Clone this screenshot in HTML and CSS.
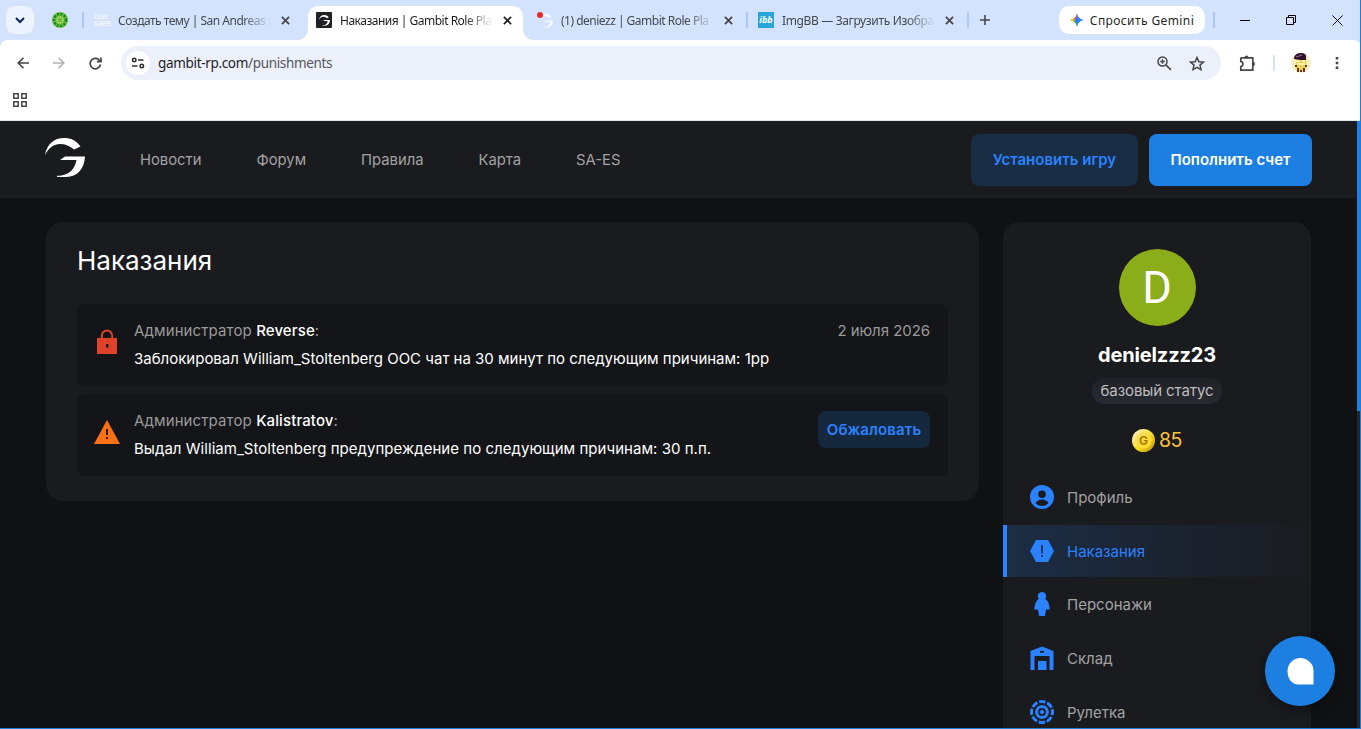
FILE: index.html
```html
<!DOCTYPE html>
<html lang="ru">
<head>
<meta charset="utf-8">
<title>Наказания | Gambit Role Play</title>
<link rel="stylesheet" href="styles.css">
</head>
<body>
<svg class="defs" aria-hidden="true">
  <symbol id="close" viewBox="0 0 10 10"><path d="M1 1l8 8M9 1L1 9" fill="none" stroke="currentColor" stroke-width="2"/></symbol>
  <symbol id="gambit" viewBox="0 0 40 40"><path d="M0 17C2 6 9 0 19 0c7 0 12.500 2.500 16.500 8.500L29 11.500C25 8 20.500 6 15 6 9 6 4 9.500 0 17zM20 18.500h20c-.5 12-7.500 20.500-19 20.500h-9v-1.200c9 0 17-3.300 19.500-15.800H15z" fill="currentColor"/></symbol>
</svg>
<div class="window">
  <div class="tabstrip">
    <button class="tab-search"><svg width="10" height="7" viewBox="0 0 10 7"><path d="M1 1l4 4 4-4" fill="none" stroke="#0b2459" stroke-width="2"/></svg></button>
    <svg class="pinned" width="16" height="16" viewBox="0 0 16 16"><circle cx="8" cy="8" r="8" fill="#6dba3c"/><circle cx="8" cy="8" r="6" fill="none" stroke="#138a22" stroke-width="2.500" stroke-dasharray="2 1.500"/><circle cx="8" cy="8" r="3" fill="none" stroke="#d1ed8b" stroke-width="1.500" stroke-dasharray="1 1"/></svg>
    <i class="sep"></i>
    <div class="tab tab-first"><span class="luasaes"><b>LUA:</b><b>SAES</b></span><span class="title">Создать тему | San Andreas E</span><svg class="x"><use href="#close"/></svg></div>
    <div class="tab active"><span class="gfav"><svg width="11" height="11"><use href="#gambit"/></svg></span><span class="title">Наказания | Gambit Role Pla</span><svg class="x"><use href="#close"/></svg></div>
    <div class="tab"><span class="gfav light"><svg width="14" height="14"><use href="#gambit"/></svg></span><span class="title">(1) deniezz | Gambit Role Pla</span><svg class="x"><use href="#close"/></svg></div>
    <i class="sep"></i>
    <div class="tab tab-last"><span class="ibb">ibb</span><span class="title">ImgBB — Загрузить Изобра</span><svg class="x"><use href="#close"/></svg></div>
    <i class="sep"></i>
    <svg class="plus" width="12" height="12" viewBox="0 0 12 12"><path d="M6 1v10M1 6h10" stroke="#444746" stroke-width="1.600"/></svg>
    <div class="tab-tools">
      <button class="gemini"><svg width="14" height="14" viewBox="0 0 14 14"><path d="M7 0Q8 6 14 7 8 8 7 14V0z" fill="#317efb"/><path d="M7 0Q6 6 0 7h7z" fill="#f4524d"/><path d="M0 7q6 1 7 7V7z" fill="#22b064"/><path d="M0 7l3.500-1.200L5 7l-1.500 1.200z" fill="#fbbc05"/><circle cx="7.500" cy="7" r="2.500" fill="#317efb"/></svg><span>Спросить Gemini</span></button>
      <i class="sep"></i>
      <svg class="win-min" width="10" height="11" viewBox="0 0 10 11"><path d="M0 5.500h10" stroke="#000"/></svg>
      <svg class="win-max" width="10" height="10" viewBox="0 0 10 10"><path d="M.5 2.500h7v7h-7zM2.500 2.500v-2h7v7h-2" fill="none" stroke="#000"/></svg>
      <svg class="win-close" width="11" height="11" viewBox="0 0 11 11"><path d="M.5.5l10 10M10.500.5l-10 10" stroke="#000"/></svg>
    </div>
  </div>
  <div class="toolbar">
    <div class="nav-buttons">
      <svg width="12" height="12" viewBox="0 0 12 12"><path d="M6.500.8L1.200 6l5.300 5.200M1.200 6H12" fill="none" stroke="#444746" stroke-width="1.600"/></svg>
      <svg width="12" height="12" viewBox="0 0 12 12"><path d="M5.500.8L10.800 6l-5.300 5.200M10.800 6H0" fill="none" stroke="#b0b1b1" stroke-width="1.600"/></svg>
      <svg width="13" height="13" viewBox="0 0 13 13"><path d="M11 4.200A5.200 5.200 0 1 0 11.500 7.500M12 .5v4.200H7.800" fill="none" stroke="#444746" stroke-width="1.700"/></svg>
    </div>
    <div class="omnibox">
      <span class="site"><svg width="14" height="12" viewBox="0 0 14 12"><g fill="none" stroke="#303236" stroke-width="1.600"><circle cx="3.200" cy="3" r="1.700"/><path d="M7 3h5.500M1 9h5.500"/><circle cx="10.800" cy="9" r="1.700"/></g></svg></span>
      <span class="url"><b>gambit-rp.com</b>/punishments</span>
      <svg class="zoom" width="15" height="15" viewBox="0 0 15 15"><g fill="none" stroke="#444746" stroke-width="1.500"><circle cx="5.500" cy="5.500" r="4.500"/><path d="M8.900 8.900l5 5M5.500 3.300v4.400M3.300 5.500h4.400"/></g></svg>
      <svg width="16" height="15" viewBox="0 0 16 15"><path d="M8 1.500l1.900 4.200 4.500.4-3.400 3 1 4.500L8 11.300l-4 2.300 1-4.500-3.400-3 4.500-.4z" fill="none" stroke="#444746" stroke-width="1.500"/></svg>
    </div>
    <svg class="puzzle" width="17" height="17" viewBox="0 0 17 17"><path d="M1.800 2.800h12v4.400M13.800 10.800v4.400h-12v-3.700c2.800-.4 2.800-4.600 0-5V2.800M13.800 7v4" fill="none" stroke="#444746" stroke-width="1.700"/><path d="M5.500 2.600a2 2 0 0 1 4 0zM14 7a2 2 0 0 1 0 4z" fill="#444746"/></svg>
    <i class="sep pale"></i>
    <svg class="profile" width="20" height="20" viewBox="0 0 20 20"><circle cx="10" cy="10" r="10" fill="#f7efbd"/><path d="M5 6h10v9l-2 3H7l-2-3z" fill="#e9ce5b"/><path d="M3 5Q4 0 10 0t5 5v2H9L3 6z" fill="#30102f"/><path d="M5 4l6-2" stroke="#9a6e96"/><path d="M5 8h4M11 8h3M6 11h8" stroke="#fff5a6" stroke-width="2"/><path d="M4 13h2M14 13h2M6 16h2M12 16h2M7 19v-2M10 19v-2M13 19v-2" stroke="#693321" stroke-width="2"/></svg>
    <svg width="4" height="14" viewBox="0 0 4 14"><path d="M.7 1h2.600v2.600H.7zM.7 5.700h2.600v2.600H.7zM.7 10.400h2.600V13H.7z" fill="#444746"/></svg>
  </div>
  <div class="bookmarks"><svg width="14" height="14" viewBox="0 0 14 14"><path d="M.8.8h4.400v4.400H.8zM8.800.8h4.400v4.400H8.800zM.8 8.800h4.400v4.400H.8zM8.800 8.800h4.400v4.400H8.800z" fill="none" stroke="#444746" stroke-width="1.500"/></svg></div>
  <div class="page">
    <header class="site-header">
      <svg class="logo" width="40" height="40"><use href="#gambit"/></svg>
      <nav><a>Новости</a><a>Форум</a><a>Правила</a><a>Карта</a><a>SA-ES</a></nav>
      <button class="btn install">Установить игру</button>
      <button class="btn topup">Пополнить счет</button>
    </header>
    <div class="content">
      <main class="card">
        <h1>Наказания</h1>
        <section class="entry">
          <svg class="icon" width="26" height="26" viewBox="0 0 26 26"><path d="M7.800 10V6.700a5.200 5.200 0 0 1 10.400 0V10" fill="none" stroke="#df422a" stroke-width="2"/><path d="M3 9h20v16H3z" fill="#df422a"/><path d="M12 15h2.500v3.500H12z" fill="#241414"/></svg>
          <div class="body"><p class="who">Администратор <b>Reverse</b>:</p><p class="what">Заблокировал William_Stoltenberg OOC чат на 30 минут по следующим причинам: 1pp</p></div>
          <time>2 июля 2026</time>
        </section>
        <section class="entry">
          <svg class="icon" width="26" height="26" viewBox="0 0 26 26"><path d="M13 1l13 24H0z" fill="#fa7116"/><path d="M12 10h2v6h-2zM12 18h2v2h-2z" fill="#281b15"/></svg>
          <div class="body"><p class="who">Администратор <b>Kalistratov</b>:</p><p class="what warning">Выдал William_Stoltenberg предупреждение по следующим причинам: 30 п.п.</p></div>
          <button class="appeal">Обжаловать</button>
        </section>
      </main>
      <aside class="card side">
        <div class="avatar">D</div>
        <div class="name">denielzzz23</div>
        <div class="status">базовый статус</div>
        <div class="coins"><svg width="23" height="23" viewBox="0 0 23 23"><defs><linearGradient id="gold" x2="1" y2="1"><stop offset="0" stop-color="#fffbe0"/><stop offset=".55" stop-color="#fbd91c"/><stop offset="1" stop-color="#b98a16"/></linearGradient><linearGradient id="coin" x2="1" y2="1"><stop offset="0" stop-color="#f3dc78"/><stop offset="1" stop-color="#ffdc0c"/></linearGradient></defs><circle cx="11.500" cy="11.500" r="11.500" fill="url(#gold)"/><circle cx="11.500" cy="11.500" r="8.300" fill="url(#coin)"/><text x="11.500" y="16" text-anchor="middle" class="coin-g">G</text></svg><span>85</span></div>
        <ul class="menu">
          <li><svg width="24" height="24" viewBox="0 0 24 24"><circle cx="12" cy="12" r="12" fill="#2a82ff"/><circle cx="12" cy="9.300" r="3.800" fill="#1a1b1f"/><path d="M5.500 18q2.500-3.500 6.500-3.500t6.500 3.500Q16 21 12 21t-6.500-3z" fill="#1a1b1f"/></svg><span>Профиль</span></li>
          <li class="selected"><svg width="24" height="24" viewBox="0 0 24 24"><path d="M6 1h12l6 11-6 11H6L0 12z" fill="#2a82ff"/><path d="M11.200 6h1.700v8.500h-1.700zM11.200 16h1.700v2h-1.700z" fill="#1b2a41"/></svg><span>Наказания</span></li>
          <li><svg width="24" height="24" viewBox="0 0 24 24"><circle cx="12" cy="4.200" r="4.200" fill="#2a82ff"/><path d="M8.500 7h7q4 3 4.200 10.500h-3.500L14.800 24H9.200l-1.400-6.500H4.300Q4.500 10 8.500 7z" fill="#2a82ff"/></svg><span>Персонажи</span></li>
          <li><svg width="24" height="24" viewBox="0 0 24 24"><path d="M.5 5L12 .5 23.500 5v19h-4V10h-15v14h-4z" fill="#2a82ff"/><path d="M8 15h8.500v9H8z" fill="#2a82ff"/><path d="M10 5h4v1.700h-4z" fill="#1a1b1f"/></svg><span>Склад</span></li>
          <li><svg width="24" height="24" viewBox="0 0 24 24"><g fill="none" stroke="#2a82ff"><circle cx="12" cy="12" r="10.500" stroke-width="3" stroke-dasharray="6.450 1.797" stroke-dashoffset="3.225"/><circle cx="12" cy="12" r="5.400" stroke-width="3"/></g><path d="M12 9.200l2.800 2.800-2.800 2.800L9.200 12z" fill="#2a82ff"/></svg><span>Рулетка</span></li>
        </ul>
      </aside>
    </div>
    <button class="chat"><svg width="27" height="27" viewBox="0 0 27 27"><path d="M13.500 0A13 13 0 0 1 26.500 13v13.500h-15C5 26.500.5 20.500.5 13.500A13 13 0 0 1 13.500 0z" fill="#fff"/></svg></button>
    <div class="scrollbar"><i></i></div>
  </div>
</div>
</body>
</html>
```

FILE: styles.css
```css
* { box-sizing: border-box; }
body { margin: 0; width: 1361px; height: 729px; overflow: hidden; background: #101113; font-family: Inter, "Liberation Sans", sans-serif; }
button { border: 0; padding: 0; font-family: inherit; display: flex; align-items: center; justify-content: center; }
svg { display: block; flex: none; }
p, h1, ul { margin: 0; padding: 0; }
.defs { display: none; }

.window { position: relative; width: 1361px; height: 729px; display: flex; flex-direction: column; background: #d3e3fd; overflow: hidden; }
.window::after { content: ""; position: absolute; inset: 0; border-right: 1px solid #1b7fd9; border-bottom: 1px solid #1b7fd9; pointer-events: none; }

/* Tab strip */
.tabstrip { height: 40px; background: #d3e3fd; display: flex; align-items: center; font-family: "Noto Sans", sans-serif; font-size: 12px; color: #45484c; }
.tab-search { width: 28px; height: 28px; margin-left: 6px; border-radius: 9px; background: #ecf3fe; }
.pinned { margin: 0 14px 0 18px; }
.sep { width: 2px; height: 16px; background: #a8c7fa; flex: none; }
.tab { position: relative; display: flex; align-items: center; width: 223px; padding-left: 14px; height: 34px; }
.tab .title { width: 152px; margin-left: 8px; overflow: hidden; white-space: nowrap; letter-spacing: -.5px; mask-image: linear-gradient(90deg, #000 125px, transparent 153px); }
.tab .x { width: 9px; height: 9px; margin-left: 11px; color: #474747; }
.tab-first { width: 224px; padding-left: 10px; }
.tab.active { width: 215px; padding-left: 8px; background: #fff; border-radius: 10px 10px 0 0; margin-top: 6px; padding-bottom: 6px; color: #1f1f1f; }
.tab.active::before, .tab.active::after { content: ""; position: absolute; bottom: 0; width: 10px; height: 10px; }
.tab.active::before { left: -10px; background: radial-gradient(circle at 0 0, transparent 9.500px, #fff 10px); }
.tab.active::after { right: -10px; background: radial-gradient(circle at 100% 0, transparent 9.500px, #fff 10px); }
.tab.active .x { color: #222; }
.tab-last { width: 219px; padding-left: 10px; }
.tab-last .title { letter-spacing: -.35px; }
.luasaes { width: 16px; font: 700 7px/7px "Liberation Sans", sans-serif; color: #f3f7fd; letter-spacing: -.6px; display: flex; flex-direction: column; }
.gfav { position: relative; width: 16px; height: 16px; background: #202024; color: #fff; display: flex; align-items: center; justify-content: center; border-radius: 1px; }
.gfav.light { background: none; color: #f7faff; justify-content: flex-end; align-items: flex-end; }
.gfav.light::before { content: ""; position: absolute; left: 0; top: 0; width: 6px; height: 6px; border-radius: 50%; background: #e32a2a; }
.ibb { width: 16px; height: 16px; background: #2aa5dc; color: #fff; font: italic 700 9px/16px "Open Sans", sans-serif; text-align: center; }
.plus { margin-left: 10px; }
.tab-tools { margin-left: auto; display: flex; align-items: center; }
.gemini { width: 146px; height: 28px; background: #fff; border-radius: 10px; gap: 6px; margin-right: 8px; font-size: 12px; color: #1f1f1f; white-space: nowrap; letter-spacing: .4px; }
.win-min { margin: 0 36px 0 25px; }
.win-close { margin: 0 18px 0 36px; }

/* Toolbar */
.toolbar { height: 46px; display: flex; align-items: center; background: #fff; border-radius: 8px 8px 0 0; }
.nav-buttons { display: flex; gap: 24px; margin-left: 17px; width: 104px; }
.omnibox { width: 1100px; height: 34px; border-radius: 17px; background: #ecf0fa; display: flex; align-items: center; padding: 0 16px 0 5px; }
.site { width: 24px; height: 24px; border-radius: 50%; background: #fff; display: flex; align-items: center; justify-content: center; }
.url { flex: 1; margin-left: 8px; font: 13.500px "Noto Sans", sans-serif; color: #54575b; letter-spacing: -.33px; }
.url b { font-weight: 400; color: #1f1f1f; }
.zoom { margin-right: 17px; }
.puzzle { margin: 0 17px 0 18px; }
.pale { background: #d3e3fd; }
.profile { margin: 0 24px 0 16px; }
.bookmarks { height: 35px; padding: 7px 0 0 13px; background: #fff; border-bottom: 1px solid #dfe9e8; }

/* Site */
.page { position: relative; flex: 1; min-height: 0; overflow: hidden; background: #101113; }
.site-header { height: 77px; background: #1a1b1f; display: flex; align-items: center; padding: 0 49px 0 45px; }
.logo { color: #fff; margin-top: -3px; }
nav { display: flex; gap: 55px; margin-left: 55px; font-size: 14.800px; color: #a2a2a3; margin-right: auto; padding-top: 1px; }
.btn { height: 52px; border-radius: 8px; font-size: 15px; font-weight: 600; }
.install { width: 167px; background: #192d45; color: #2a82ff; }
.topup { width: 163px; margin-left: 11px; background: #1d7fe2; color: #fff; }
.content { display: flex; align-items: flex-start; gap: 24px; padding: 24px 0 0 46px; }
.card { background: #1a1b1f; border-radius: 17px; }
main.card { width: 933px; height: 279px; padding: 22px 31px 0; display: flex; flex-direction: column; }
h1 { font-size: 26px; line-height: 34px; font-weight: 400; color: #fff; margin-bottom: 26px; }
.entry { height: 82px; margin-bottom: 8px; background: #141518; border-radius: 8px; display: flex; padding: 17px 18px 0 17px; }
.icon { margin-top: 8px; }
.body { margin-left: 14px; flex: 1; white-space: nowrap; }
.who { font-size: 15px; line-height: 20px; color: #9a9a9b; letter-spacing: .11px; }
.who b { color: #fff; font-weight: 500; }
.what { font-size: 15px; line-height: 20px; color: #fff; margin-top: 8px; }
.warning { letter-spacing: .04px; }
time { font-size: 15px; line-height: 20px; color: #9a9a9b; letter-spacing: -.05px; }
.appeal { width: 112px; height: 37px; border-radius: 8px; background: #15283e; color: #2a82ff; font-size: 15px; font-weight: 600; letter-spacing: .1px; }

/* Account panel */
.side { width: 308px; height: 540px; display: flex; flex-direction: column; align-items: center; padding-top: 27px; }
.avatar { width: 77px; height: 77px; border-radius: 50%; background: #8bad1a; color: #fff; font: 45px/78px Roboto, sans-serif; text-align: center; }
.name { color: #fff; font-size: 20px; line-height: 26px; font-weight: 700; margin-top: 16px; letter-spacing: -.15px; }
.status { width: 130px; height: 26px; margin-top: 10px; border-radius: 13px; background: linear-gradient(#202227, #282a32); color: #bdbdbf; font-size: 15px; line-height: 26px; text-align: center; white-space: nowrap; letter-spacing: -.1px; }
.coins { display: flex; align-items: center; gap: 4px; margin-top: 23px; color: #ffc13a; font-size: 19.500px; line-height: 26px; letter-spacing: -.4px; }
.coin-g { font: 700 12px Inter, sans-serif; fill: #a77c09; letter-spacing: 0; }
.menu { width: 100%; margin-top: 18px; list-style: none; display: flex; flex-direction: column; gap: 1.700px; font-size: 15px; color: #a2a2a3; }
.menu li { height: 52px; display: flex; align-items: center; padding-left: 27px; gap: 13px; }
.menu span { padding-top: 1px; }
.menu .selected { padding-left: 23px; border-left: 4px solid #2a82ff; background: linear-gradient(90deg, #1c2d45, #1a1b1f); color: #2a82ff; }
.chat { position: absolute; left: 1265px; top: 515px; width: 70px; height: 70px; border-radius: 50%; background: #1d7fe2; box-shadow: 0 4px 14px rgba(0, 0, 0, .35); }
.scrollbar { position: absolute; right: 0; top: 0; width: 4px; height: 100%; background: #24262b; }
.scrollbar i { display: block; height: 290px; background: #1d7fe2; }
```
